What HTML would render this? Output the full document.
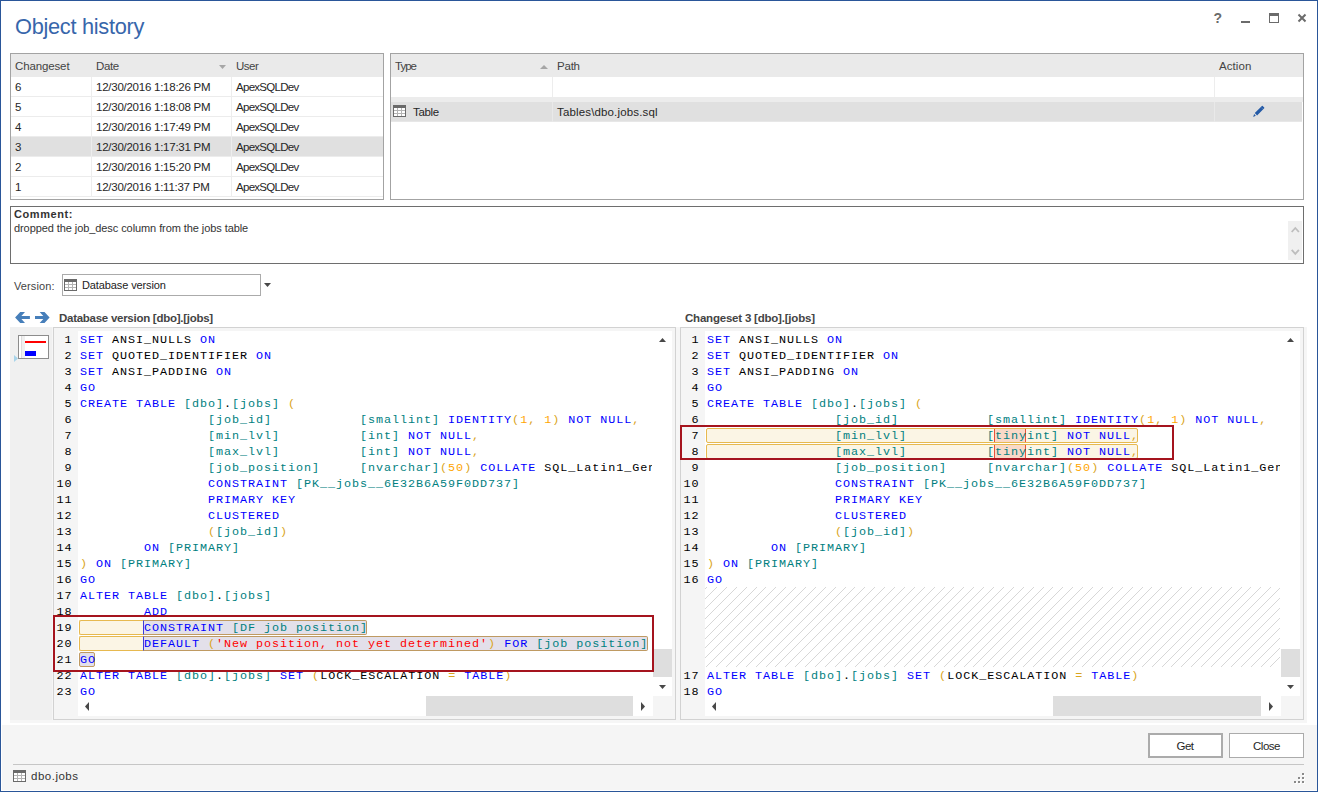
<!DOCTYPE html>
<html lang="en">
<head>
<meta charset="utf-8">
<title>Object history</title>
<style>
*{box-sizing:border-box;margin:0;padding:0}
html,body{width:1318px;height:792px;overflow:hidden;background:#fff}
body{position:relative;font-family:"Liberation Sans",sans-serif;font-size:11.5px;color:#262626}
.abs{position:absolute}
#frame{position:absolute;left:0;top:0;width:1318px;height:792px;border:1px solid #2a5699;pointer-events:none;z-index:50}
#title{position:absolute;left:15px;top:14.5px;font-size:21.8px;color:#3766ab;white-space:nowrap;line-height:24px;letter-spacing:-0.3px}
.t{position:absolute;white-space:nowrap;line-height:16px;height:16px}
/* grids */
.grid{position:absolute;border:1px solid #a3a3a3;background:#fff;overflow:hidden}
.hdr{position:absolute;left:0;top:0;right:0;height:23px;background:#eaeaea}
.hdr .t{color:#444;top:4px}
.vsep{position:absolute;width:1px;background:#ededed}
.hsep{position:absolute;height:1px;left:0;right:0;background:#ececec}
.row{position:absolute;left:0;right:0;height:20px}
.row .t{top:2px}
.sel{background:#e0e0e0}
/* comment */
#comment{position:absolute;left:10px;top:206px;width:1294px;height:58px;border:1px solid #6e6e6e;background:#fff}
.tah{font-family:"Liberation Sans",sans-serif;font-size:11px}
/* code */
.panel{position:absolute;top:327px;height:393px;border:1px solid #d2d2d2;background:#f5f5f5;overflow:hidden}
.code{position:absolute;top:4px;height:367px;overflow:hidden}
.ci,.nums{font-family:"Liberation Mono",monospace;font-size:11.75px;line-height:16px;color:#000;letter-spacing:0.95px}
.ci{width:640px}
.ln{height:16px;white-space:pre}
.codebg{position:absolute;background:#fff}
.k{color:#0000ff}.i{color:#008080}.o{color:#daa520}.n{color:#ffa500}.s{color:#ff0000}
.nums{position:absolute;top:4px;text-align:right;width:24.5px}
.hl{position:absolute;border:1px solid #e7b94f;background:#fbf5e5;border-radius:2px}
.hl2{position:absolute;border:1px solid #bf9a62;background:#e3e0ea;border-radius:2px}
.redbox{position:absolute;border:2px solid #a5141e;z-index:20}
.btn{position:absolute;top:733px;height:25px;background:#fff;border:1px solid #ababab;text-align:center;line-height:16px;color:#262626}
</style>
</head>
<body>
<!-- bottom band -->
<div class="abs" style="left:1px;top:725px;width:1316px;height:66px;background:#f5f5f5;border-left:1px solid #fff;border-bottom:1px solid #fff"></div>
<!-- editor container -->
<div class="abs" style="left:10px;top:327px;width:1297px;height:396px;background:#f6f6f6"></div>
<div class="abs" style="left:10px;top:327px;width:42px;height:393px;background:#f0f0f0"></div>

<div id="title">Object history</div>

<!-- window controls -->
<svg class="abs" style="left:1206px;top:8px" width="106" height="20" viewBox="0 0 106 20" shape-rendering="crispEdges">
  <text x="7.6" y="15" font-family="Liberation Sans, sans-serif" font-weight="bold" font-size="14" fill="#6b6b6b" shape-rendering="auto">?</text>
  <rect x="35" y="13" width="9" height="2" fill="#6b6b6b"/>
  <rect x="63" y="5" width="10" height="3" fill="#6b6b6b"/>
  <rect x="63.5" y="5.5" width="9" height="9" fill="none" stroke="#6b6b6b" stroke-width="1"/>
  <path d="M93.2 7.2 L98.8 12.8 M98.8 7.2 L93.2 12.8" stroke="#6b6b6b" stroke-width="2" stroke-linecap="square" fill="none" shape-rendering="auto"/>
</svg>

<!-- left grid -->
<div class="grid" style="left:10px;top:53px;width:374px;height:147px">
  <div class="hdr">
    <span class="t" style="left:4px;letter-spacing:-0.13px">Changeset</span>
    <span class="t" style="left:85px;letter-spacing:-0.36px">Date</span>
    <span class="t" style="left:225px;letter-spacing:-0.49px">User</span>
    <svg class="abs" style="left:208px;top:11px" width="7" height="4"><path d="M0 0H7L3.5 4Z" fill="#a6a6a6"/></svg>
  </div>
  <div class="row" style="top:23px"><span class="t" style="left:4px">6</span><span class="t" style="left:85px;letter-spacing:-0.25px">12/30/2016 1:18:26 PM</span><span class="t" style="left:225px;letter-spacing:-0.72px">ApexSQLDev</span></div>
  <div class="row" style="top:43px"><span class="t" style="left:4px">5</span><span class="t" style="left:85px;letter-spacing:-0.25px">12/30/2016 1:18:08 PM</span><span class="t" style="left:225px;letter-spacing:-0.72px">ApexSQLDev</span></div>
  <div class="row" style="top:63px"><span class="t" style="left:4px">4</span><span class="t" style="left:85px;letter-spacing:-0.25px">12/30/2016 1:17:49 PM</span><span class="t" style="left:225px;letter-spacing:-0.72px">ApexSQLDev</span></div>
  <div class="row sel" style="top:83px"><span class="t" style="left:4px">3</span><span class="t" style="left:85px;letter-spacing:-0.25px">12/30/2016 1:17:31 PM</span><span class="t" style="left:225px;letter-spacing:-0.72px">ApexSQLDev</span></div>
  <div class="row" style="top:103px"><span class="t" style="left:4px">2</span><span class="t" style="left:85px;letter-spacing:-0.25px">12/30/2016 1:15:20 PM</span><span class="t" style="left:225px;letter-spacing:-0.72px">ApexSQLDev</span></div>
  <div class="row" style="top:123px"><span class="t" style="left:4px">1</span><span class="t" style="left:85px;letter-spacing:-0.25px">12/30/2016 1:11:37 PM</span><span class="t" style="left:225px;letter-spacing:-0.72px">ApexSQLDev</span></div>
  <div class="hsep" style="top:42px"></div><div class="hsep" style="top:62px"></div><div class="hsep" style="top:82px"></div>
  <div class="hsep" style="top:102px"></div><div class="hsep" style="top:122px"></div><div class="hsep" style="top:142px"></div>
  <div class="vsep" style="left:80px;top:23px;height:120px"></div>
  <div class="vsep" style="left:220px;top:23px;height:120px"></div>
</div>

<!-- right grid -->
<div class="grid" style="left:390px;top:53px;width:914px;height:147px">
  <div class="hdr">
    <span class="t" style="left:4px;letter-spacing:-1.0px">Type</span>
    <span class="t" style="left:166px;letter-spacing:-0.22px">Path</span>
    <span class="t" style="left:828px;letter-spacing:0.07px">Action</span>
    <svg class="abs" style="left:149px;top:11px" width="8" height="4"><path d="M0 4H8L4 0Z" fill="#a6a6a6"/></svg>
  </div>
  <div class="abs" style="left:0;top:43px;width:912px;height:5px;background:#ececec"></div>
  <div class="abs" style="left:0;top:67px;width:911px;height:1px;background:#e7e7e7"></div>
  <div class="row sel" style="top:48px;width:911px;right:auto;height:19px">
    <span class="t" style="left:22px;letter-spacing:-0.35px">Table</span><span class="t" style="left:166px;letter-spacing:0.15px">Tables\dbo.jobs.sql</span>
  </div>
  <div class="vsep" style="left:161px;top:23px;height:20px"></div>
  <div class="vsep" style="left:823px;top:23px;height:20px"></div>
  <div class="vsep" style="left:161px;top:48px;height:20px;background:#e9e9e9"></div>
  <div class="vsep" style="left:823px;top:48px;height:20px;background:#e9e9e9"></div>
  <!-- table icon -->
  <svg class="abs" style="left:2px;top:51px" width="13" height="12" viewBox="0 0 13 12" shape-rendering="crispEdges">
    <rect x="0" y="0" width="13" height="12" fill="#6a6a6a"/>
    <rect x="1" y="3" width="11" height="8" fill="#b4b4b4"/>
    <g fill="#fff"><rect x="1" y="3" width="3" height="2"/><rect x="5" y="3" width="3" height="2"/><rect x="9" y="3" width="3" height="2"/>
    <rect x="1" y="6" width="3" height="2"/><rect x="5" y="6" width="3" height="2"/><rect x="9" y="6" width="3" height="2"/>
    <rect x="1" y="9" width="3" height="2"/><rect x="5" y="9" width="3" height="2"/><rect x="9" y="9" width="3" height="2"/></g>
  </svg>
  <!-- pencil -->
  <svg class="abs" style="left:860px;top:51px" width="15" height="14" viewBox="0 0 15 14">
    <path d="M3.8 8.1 L10.9 1 Q11.3 0.6 11.7 1 L13.2 2.5 Q13.6 2.9 13.2 3.3 L6.1 10.4 Z" fill="#245aa6"/>
    <path d="M3.1 9.1 L4.8 10.8 L2.2 11.9 Z" fill="#245aa6"/>
    <path d="M10.4 2.6 L11.6 3.8" stroke="#7fa0cf" stroke-width="0.6"/>
  </svg>
</div>

<!-- comment -->
<div id="comment">
  <span class="t tah" style="left:3px;top:-1px;font-weight:bold;color:#333;letter-spacing:0.57px">Comment:</span>
  <span class="t tah" style="left:3px;top:13px;color:#333;letter-spacing:-0.08px">dropped the job_desc column from the jobs table</span>
  <div class="abs" style="left:1277px;top:14px;width:14px;height:39px;background:#f0f0f0"></div>
  <svg class="abs" style="left:1277px;top:14px" width="14" height="39" viewBox="0 0 14 39"><path d="M3.7 11 L7.3 7 L10.9 11 M3.7 28.8 L7.3 32.8 L10.9 28.8" fill="none" stroke="#bebebe" stroke-width="1.8"/></svg>
</div>

<!-- version row -->
<span class="t tah" style="left:14px;top:278px;color:#444;letter-spacing:0.1px">Version:</span>
<div class="abs" style="left:62px;top:274px;width:199px;height:22px;border:1px solid #ababab;background:#fff"></div>
<svg class="abs" style="left:64px;top:279px" width="13" height="12" viewBox="0 0 13 12" shape-rendering="crispEdges">
    <rect x="0" y="0" width="13" height="12" fill="#6a6a6a"/>
    <rect x="1" y="3" width="11" height="8" fill="#b4b4b4"/>
    <g fill="#fff"><rect x="1" y="3" width="3" height="2"/><rect x="5" y="3" width="3" height="2"/><rect x="9" y="3" width="3" height="2"/>
    <rect x="1" y="6" width="3" height="2"/><rect x="5" y="6" width="3" height="2"/><rect x="9" y="6" width="3" height="2"/>
    <rect x="1" y="9" width="3" height="2"/><rect x="5" y="9" width="3" height="2"/><rect x="9" y="9" width="3" height="2"/></g>
</svg>
<span class="t tah" style="left:82px;top:277px;color:#222;letter-spacing:-0.11px">Database version</span>
<svg class="abs" style="left:264px;top:283px" width="7" height="4"><path d="M0 0H7L3.5 4Z" fill="#484848"/></svg>

<!-- nav arrows -->
<svg class="abs" style="left:15px;top:312px" width="36" height="11" viewBox="0 0 36 11">
  <path d="M0.1 5.45 L5.2 0 H10 L6.4 3.9 H14.9 V6.9 H6.4 L10 10.9 H5.2 Z" fill="#477fba"/>
  <path d="M34.6 5.45 L29.5 0 H24.7 L28.3 3.9 H20 V6.9 H28.3 L24.7 10.9 H29.5 Z" fill="#477fba"/>
</svg>
<span class="t" style="left:59px;top:310px;font-weight:bold;font-size:11.5px;color:#444;letter-spacing:-0.27px">Database version [dbo].[jobs]</span>
<span class="t" style="left:685px;top:310px;font-weight:bold;font-size:11.5px;color:#444;letter-spacing:-0.21px">Changeset 3 [dbo].[jobs]</span>

<!-- diff map icon -->
<div class="abs" style="left:18px;top:335px;width:31px;height:24px;border:1px solid #8c8c8c;background:#fff">
  <div class="abs" style="left:2px;top:0;width:1px;height:22px;background:#dcdcdc"></div><div class="abs" style="left:3px;top:0;width:3px;height:22px;background:#f0f0f0"></div>
  <div class="abs" style="left:6px;top:5px;width:21px;height:2px;background:#ff0000"></div>
  <div class="abs" style="left:6px;top:15px;width:11px;height:5px;background:#0000ff"></div>
</div>
<svg class="abs" style="left:14px;top:355px" width="4" height="7"><path d="M0 0L4 3.5L0 7Z" fill="#a8d4ea"/></svg>

<!-- LEFT PANEL -->
<div class="panel" style="left:53px;width:623px">
  <div class="codebg" style="left:24px;top:3px;width:575px;height:385px"></div>
  <div class="codebg" style="left:599px;top:3px;width:19px;height:365px"></div>
  <!-- highlights -->
  <div class="hl" style="left:25px;top:292px;width:65px;height:15px;border-right:none;border-radius:2px 0 0 2px"></div>
  <div class="hl2" style="left:89px;top:292px;width:224px;height:15px;border-left:1px solid #3b3bd8;border-radius:0 2px 2px 0"></div>
  <div class="hl" style="left:25px;top:308px;width:65px;height:15px;border-right:none;border-radius:2px 0 0 2px"></div>
  <div class="hl2" style="left:89px;top:308px;width:505px;height:15px;border-left:1px solid #3b3bd8;border-radius:0 2px 2px 0"></div>
  <div class="hl2" style="left:25px;top:324px;width:16px;height:15px"></div>
  <div class="nums" style="left:-6px">
<div class="ln">1</div>
<div class="ln">2</div>
<div class="ln">3</div>
<div class="ln">4</div>
<div class="ln">5</div>
<div class="ln">6</div>
<div class="ln">7</div>
<div class="ln">8</div>
<div class="ln">9</div>
<div class="ln">10</div>
<div class="ln">11</div>
<div class="ln">12</div>
<div class="ln">13</div>
<div class="ln">14</div>
<div class="ln">15</div>
<div class="ln">16</div>
<div class="ln">17</div>
<div class="ln">18</div>
<div class="ln">19</div>
<div class="ln">20</div>
<div class="ln">21</div>
<div class="ln">22</div>
<div class="ln">23</div>
  </div>
  <div class="code" style="left:26px;width:572px"><div class="ci">
<div class="ln"><span class="k">SET</span> ANSI_NULLS <span class="k">ON</span></div>
<div class="ln"><span class="k">SET</span> QUOTED_IDENTIFIER <span class="k">ON</span></div>
<div class="ln"><span class="k">SET</span> ANSI_PADDING <span class="k">ON</span></div>
<div class="ln"><span class="k">GO</span></div>
<div class="ln"><span class="k">CREATE TABLE </span><span class="i">[dbo]</span>.<span class="i">[jobs]</span> <span class="o">(</span></div>
<div class="ln">                <span class="i">[job_id]</span>           <span class="i">[smallint]</span> <span class="k">IDENTITY</span><span class="o">(</span><span class="n">1</span><span class="o">,</span> <span class="n">1</span><span class="o">)</span> <span class="k">NOT NULL</span><span class="o">,</span></div>
<div class="ln">                <span class="i">[min_lvl]</span>          <span class="i">[int]</span> <span class="k">NOT NULL</span><span class="o">,</span></div>
<div class="ln">                <span class="i">[max_lvl]</span>          <span class="i">[int]</span> <span class="k">NOT NULL</span><span class="o">,</span></div>
<div class="ln">                <span class="i">[job_position]</span>     <span class="i">[nvarchar]</span><span class="o">(</span><span class="n">50</span><span class="o">)</span> <span class="k">COLLATE</span> SQL_Latin1_General_CP1_CI_AS <span class="k">NULL</span><span class="o">,</span></div>
<div class="ln">                <span class="k">CONSTRAINT </span><span class="i">[PK__jobs__6E32B6A59F0DD737]</span></div>
<div class="ln">                <span class="k">PRIMARY KEY</span></div>
<div class="ln">                <span class="k">CLUSTERED</span></div>
<div class="ln">                <span class="o">(</span><span class="i">[job_id]</span><span class="o">)</span></div>
<div class="ln">        <span class="k">ON </span><span class="i">[PRIMARY]</span></div>
<div class="ln"><span class="o">)</span> <span class="k">ON </span><span class="i">[PRIMARY]</span></div>
<div class="ln"><span class="k">GO</span></div>
<div class="ln"><span class="k">ALTER TABLE </span><span class="i">[dbo]</span>.<span class="i">[jobs]</span></div>
<div class="ln">        <span class="k">ADD</span></div>
<div class="ln">        <span class="k">CONSTRAINT </span><span class="i">[DF job position]</span></div>
<div class="ln">        <span class="k">DEFAULT </span><span class="o">(</span><span class="s">'New position, not yet determined'</span><span class="o">)</span> <span class="k">FOR </span><span class="i">[job position]</span></div>
<div class="ln"><span class="k">GO</span></div>
<div class="ln"><span class="k">ALTER TABLE </span><span class="i">[dbo]</span>.<span class="i">[jobs]</span> <span class="k">SET</span> <span class="o">(</span>LOCK_ESCALATION <span class="o">=</span> <span class="k">TABLE</span><span class="o">)</span></div>
<div class="ln"><span class="k">GO</span></div>
  </div></div>
  <!-- v scrollbar -->
  <div class="abs" style="left:599px;top:321px;width:19px;height:28px;background:#dedede"></div>
  <svg class="abs" style="left:605px;top:10px" width="7" height="4"><path d="M0 4H7L3.5 0Z" fill="#484848"/></svg>
  <svg class="abs" style="left:605px;top:357px" width="7" height="4"><path d="M0 0H7L3.5 4Z" fill="#484848"/></svg>
  <!-- h scrollbar -->
  <div class="abs" style="left:372px;top:368px;width:207px;height:20px;background:#dedede"></div>
  <svg class="abs" style="left:31px;top:374px" width="4" height="9"><path d="M4 0V9L0 4.5Z" fill="#484848"/></svg>
  <svg class="abs" style="left:587px;top:374px" width="4" height="9"><path d="M0 0V9L4 4.5Z" fill="#484848"/></svg>
</div>
<div class="redbox" style="left:53px;top:615px;width:601px;height:57px"></div>

<!-- RIGHT PANEL -->
<div class="panel" style="left:680px;width:624px">
  <div class="codebg" style="left:24px;top:3px;width:576px;height:385px"></div>
  <div class="codebg" style="left:600px;top:3px;width:19px;height:365px"></div>
  <!-- hatch -->
  <svg class="abs" style="left:24px;top:259px" width="575" height="80" viewBox="0 0 575 80" shape-rendering="crispEdges"><path d="M2.00 0L-78.00 80M11.90 0L-68.10 80M21.80 0L-58.20 80M31.70 0L-48.30 80M41.60 0L-38.40 80M51.50 0L-28.50 80M61.40 0L-18.60 80M71.30 0L-8.70 80M81.20 0L1.20 80M91.10 0L11.10 80M101.00 0L21.00 80M110.89 0L30.89 80M120.79 0L40.79 80M130.69 0L50.69 80M140.59 0L60.59 80M150.49 0L70.49 80M160.39 0L80.39 80M170.29 0L90.29 80M180.19 0L100.19 80M190.09 0L110.09 80M199.99 0L119.99 80M209.89 0L129.89 80M219.79 0L139.79 80M229.69 0L149.69 80M239.59 0L159.59 80M249.49 0L169.49 80M259.39 0L179.39 80M269.29 0L189.29 80M279.19 0L199.19 80M289.09 0L209.09 80M298.99 0L218.99 80M308.88 0L228.88 80M318.78 0L238.78 80M328.68 0L248.68 80M338.58 0L258.58 80M348.48 0L268.48 80M358.38 0L278.38 80M368.28 0L288.28 80M378.18 0L298.18 80M388.08 0L308.08 80M397.98 0L317.98 80M407.88 0L327.88 80M417.78 0L337.78 80M427.68 0L347.68 80M437.58 0L357.58 80M447.48 0L367.48 80M457.38 0L377.38 80M467.28 0L387.28 80M477.18 0L397.18 80M487.08 0L407.08 80M496.97 0L416.97 80M506.87 0L426.87 80M516.77 0L436.77 80M526.67 0L446.67 80M536.57 0L456.57 80M546.47 0L466.47 80M556.37 0L476.37 80M566.27 0L486.27 80M576.17 0L496.17 80M586.07 0L506.07 80M595.97 0L515.97 80M605.87 0L525.87 80M615.77 0L535.77 80M625.67 0L545.67 80M635.57 0L555.57 80M645.47 0L565.47 80" stroke="#c8c8c8" stroke-width="0.72" fill="none"/></svg>
  <!-- highlights -->
  <div class="hl" style="left:25px;top:100px;width:432px;height:15px"></div>
  <div class="hl" style="left:25px;top:116px;width:432px;height:15px"></div>
  <div class="abs" style="left:313px;top:101px;width:32px;height:13px;background:#f9d9c8;border-left:1px solid #e8523c;border-right:1px solid #e8523c"></div>
  <div class="abs" style="left:313px;top:117px;width:32px;height:13px;background:#f9d9c8;border-left:1px solid #e8523c;border-right:1px solid #e8523c"></div>
  <div class="nums" style="left:-6px">
<div class="ln">1</div>
<div class="ln">2</div>
<div class="ln">3</div>
<div class="ln">4</div>
<div class="ln">5</div>
<div class="ln">6</div>
<div class="ln">7</div>
<div class="ln">8</div>
<div class="ln">9</div>
<div class="ln">10</div>
<div class="ln">11</div>
<div class="ln">12</div>
<div class="ln">13</div>
<div class="ln">14</div>
<div class="ln">15</div>
<div class="ln">16</div>
<div class="ln">&nbsp;</div>
<div class="ln">&nbsp;</div>
<div class="ln">&nbsp;</div>
<div class="ln">&nbsp;</div>
<div class="ln">&nbsp;</div>
<div class="ln">17</div>
<div class="ln">18</div>
  </div>
  <div class="code" style="left:26px;width:573px"><div class="ci">
<div class="ln"><span class="k">SET</span> ANSI_NULLS <span class="k">ON</span></div>
<div class="ln"><span class="k">SET</span> QUOTED_IDENTIFIER <span class="k">ON</span></div>
<div class="ln"><span class="k">SET</span> ANSI_PADDING <span class="k">ON</span></div>
<div class="ln"><span class="k">GO</span></div>
<div class="ln"><span class="k">CREATE TABLE </span><span class="i">[dbo]</span>.<span class="i">[jobs]</span> <span class="o">(</span></div>
<div class="ln">                <span class="i">[job_id]</span>           <span class="i">[smallint]</span> <span class="k">IDENTITY</span><span class="o">(</span><span class="n">1</span><span class="o">,</span> <span class="n">1</span><span class="o">)</span> <span class="k">NOT NULL</span><span class="o">,</span></div>
<div class="ln">                <span class="i">[min_lvl]</span>          <span class="i">[tinyint]</span> <span class="k">NOT NULL</span><span class="o">,</span></div>
<div class="ln">                <span class="i">[max_lvl]</span>          <span class="i">[tinyint]</span> <span class="k">NOT NULL</span><span class="o">,</span></div>
<div class="ln">                <span class="i">[job_position]</span>     <span class="i">[nvarchar]</span><span class="o">(</span><span class="n">50</span><span class="o">)</span> <span class="k">COLLATE</span> SQL_Latin1_General_CP1_CI_AS <span class="k">NULL</span><span class="o">,</span></div>
<div class="ln">                <span class="k">CONSTRAINT </span><span class="i">[PK__jobs__6E32B6A59F0DD737]</span></div>
<div class="ln">                <span class="k">PRIMARY KEY</span></div>
<div class="ln">                <span class="k">CLUSTERED</span></div>
<div class="ln">                <span class="o">(</span><span class="i">[job_id]</span><span class="o">)</span></div>
<div class="ln">        <span class="k">ON </span><span class="i">[PRIMARY]</span></div>
<div class="ln"><span class="o">)</span> <span class="k">ON </span><span class="i">[PRIMARY]</span></div>
<div class="ln"><span class="k">GO</span></div>
<div class="ln">&nbsp;</div>
<div class="ln">&nbsp;</div>
<div class="ln">&nbsp;</div>
<div class="ln">&nbsp;</div>
<div class="ln">&nbsp;</div>
<div class="ln"><span class="k">ALTER TABLE </span><span class="i">[dbo]</span>.<span class="i">[jobs]</span> <span class="k">SET</span> <span class="o">(</span>LOCK_ESCALATION <span class="o">=</span> <span class="k">TABLE</span><span class="o">)</span></div>
<div class="ln"><span class="k">GO</span></div>
  </div></div>
  <div class="abs" style="left:600px;top:321px;width:19px;height:28px;background:#dedede"></div>
  <svg class="abs" style="left:606px;top:10px" width="7" height="4"><path d="M0 4H7L3.5 0Z" fill="#484848"/></svg>
  <svg class="abs" style="left:606px;top:357px" width="7" height="4"><path d="M0 0H7L3.5 4Z" fill="#484848"/></svg>
  <div class="abs" style="left:372px;top:368px;width:208px;height:20px;background:#dedede"></div>
  <svg class="abs" style="left:31px;top:374px" width="4" height="9"><path d="M4 0V9L0 4.5Z" fill="#484848"/></svg>
  <svg class="abs" style="left:588px;top:374px" width="4" height="9"><path d="M0 0V9L4 4.5Z" fill="#484848"/></svg>
</div>
<div class="redbox" style="left:680px;top:425px;width:494px;height:35px"></div>

<!-- buttons -->
<div class="btn" style="left:1148px;width:75px;border:2px solid #ababab;padding-top:3px;padding-right:1px;letter-spacing:-0.57px">Get</div>
<div class="btn" style="left:1229px;width:75px;padding-top:4px;letter-spacing:-0.5px">Close</div>

<!-- status bar -->
<div class="abs" style="left:13px;top:764px;width:1291px;height:1px;background:#c6c6c6"></div>
<svg class="abs" style="left:13px;top:770px" width="13" height="12" viewBox="0 0 13 12" shape-rendering="crispEdges">
    <rect x="0" y="0" width="13" height="12" fill="#6a6a6a"/>
    <rect x="1" y="3" width="11" height="8" fill="#b4b4b4"/>
    <g fill="#fff"><rect x="1" y="3" width="3" height="2"/><rect x="5" y="3" width="3" height="2"/><rect x="9" y="3" width="3" height="2"/>
    <rect x="1" y="6" width="3" height="2"/><rect x="5" y="6" width="3" height="2"/><rect x="9" y="6" width="3" height="2"/>
    <rect x="1" y="9" width="3" height="2"/><rect x="5" y="9" width="3" height="2"/><rect x="9" y="9" width="3" height="2"/></g>
</svg>
<span class="t" style="left:31px;top:768px;color:#333;letter-spacing:0.5px">dbo.jobs</span>
<svg class="abs" style="left:1294px;top:773px" width="11" height="11" shape-rendering="crispEdges">
  <g fill="#fff"><rect x="9" y="1" width="2" height="2"/><rect x="5" y="5" width="2" height="2"/><rect x="9" y="5" width="2" height="2"/><rect x="1" y="9" width="2" height="2"/><rect x="5" y="9" width="2" height="2"/><rect x="9" y="9" width="2" height="2"/></g>
  <g fill="#8a8a8a"><rect x="8" y="0" width="2" height="2"/><rect x="4" y="4" width="2" height="2"/><rect x="8" y="4" width="2" height="2"/><rect x="0" y="8" width="2" height="2"/><rect x="4" y="8" width="2" height="2"/><rect x="8" y="8" width="2" height="2"/></g>
</svg>

<div id="frame"></div>
</body>
</html>
